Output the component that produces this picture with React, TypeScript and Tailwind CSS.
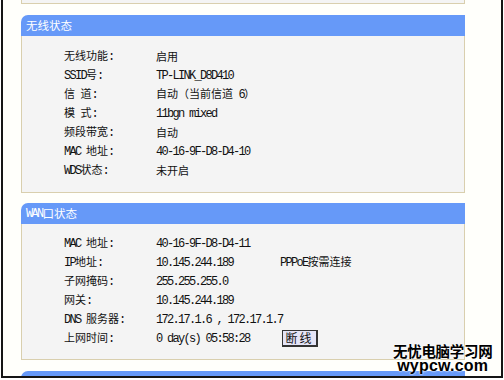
import React from "react";

const CJK = /[\u2E80-\u9FFF\uFF00-\uFFEF\u3000-\u303F]/;
const SPLIT = /([\u2E80-\u9FFF\uFF00-\uFFEF\u3000-\u303F]+)/;

function M({ s }: { s: string }) {
  const parts = s.split(SPLIT).filter((p) => p.length > 0);
  return (
    <>
      {parts.map((p, i) =>
        CJK.test(p) ? (
          <span key={i} className="font-['Noto_Sans_CJK_SC',sans-serif]">
            {p}
          </span>
        ) : (
          <span key={i} className="font-['Liberation_Mono',monospace] text-[12px] tracking-[-1.7px] whitespace-pre">
            {p}
          </span>
        )
      )}
    </>
  );
}

type Row = { label: string; value: string; extra?: React.ReactNode };

function Header({ title }: { title: string }) {
  return (
    <div className="w-[444px] h-[21px] bg-[#6699f8] rounded-tl-[7px] pl-[5px] flex items-center text-white text-[11.5px] leading-none">
      <M s={title} />
    </div>
  );
}

function Panel({
  title,
  rows,
  pt,
  pb,
}: {
  title: string;
  rows: Row[];
  pt: string;
  pb: string;
}) {
  return (
    <div className="w-[444px]">
      <Header title={title} />
      <div className={`border-x border-b border-[#d9cfae] bg-[#f4f4f4] ${pt} ${pb}`}>
        {rows.map((r, i) => (
          <div key={i} className="h-[19px] flex items-center text-[11px] text-[#111] leading-none">
            <div className="w-[92px] ml-[42px] shrink-0">
              <M s={r.label} />
            </div>
            <div className="w-[124px] shrink-0">
              <M s={r.value} />
            </div>
            {r.extra}
          </div>
        ))}
      </div>
    </div>
  );
}

export default function App() {
  const wireless: Row[] = [
    { label: "无线功能:", value: "启用" },
    { label: "SSID号:", value: "TP-LINK_D8D410" },
    { label: "信 道:", value: "自动（当前信道 6）" },
    { label: "模 式:", value: "11bgn mixed" },
    { label: "频段带宽:", value: "自动" },
    { label: "MAC 地址:", value: "40-16-9F-D8-D4-10" },
    { label: "WDS状态:", value: "未开启" },
  ];
  const wan: Row[] = [
    { label: "MAC 地址:", value: "40-16-9F-D8-D4-11" },
    {
      label: "IP地址:",
      value: "10.145.244.189",
      extra: (
        <div className="text-[11px]">
          <M s="PPPoE按需连接" />
        </div>
      ),
    },
    { label: "子网掩码:", value: "255.255.255.0" },
    { label: "网关:", value: "10.145.244.189" },
    { label: "DNS 服务器:", value: "172.17.1.6 , 172.17.1.7" },
    {
      label: "上网时间:",
      value: "0 day(s) 05:58:28",
      extra: (
        <div className="ml-[2px] w-[36px] h-[17px] bg-[#e4e4f6] border border-[#333] border-r-2 border-b-2 flex items-center justify-center text-[12px] tracking-[2px] font-['Noto_Sans_CJK_SC',sans-serif] text-[#111]">
          断线
        </div>
      ),
    },
  ];

  return (
    <div className="w-[504px] h-[380px] bg-white relative overflow-hidden">
      <div className="ml-[1px] w-[502px] h-[378px] border-x-2 border-b-2 border-[#151515] bg-[#fffffb] overflow-hidden">
        <div className="pl-[18px]">
          <div className="w-[444px] h-[4px] border-x border-b border-[#d9cfae] bg-[#f4f4f4]" />
          <div className="h-[11px]" />
          <Panel title="无线状态" rows={wireless} pt="pt-[11px]" pb="pb-[12px]" />
          <div className="h-[10px]" />
          <Panel title="WAN口状态" rows={wan} pt="pt-[10px]" pb="pb-[11px]" />
          <div className="h-[11px]" />
          <Header title="WAN口流量统计" />
        </div>
      </div>
      <div className="absolute left-[393px] top-[343px] flex flex-col items-center leading-none text-[#000] [text-shadow:0_0_2px_#fff,0_0_2px_#fff]">
        <div className="text-[14.5px] font-bold font-['Noto_Sans_CJK_SC',sans-serif] tracking-[-0.3px] leading-[16px]">
          无忧电脑学习网
        </div>
        <div className="text-[16px] font-bold font-['Liberation_Sans',sans-serif] leading-[14px] tracking-[0.2px]">
          wypcw.com
        </div>
      </div>
    </div>
  );
}
